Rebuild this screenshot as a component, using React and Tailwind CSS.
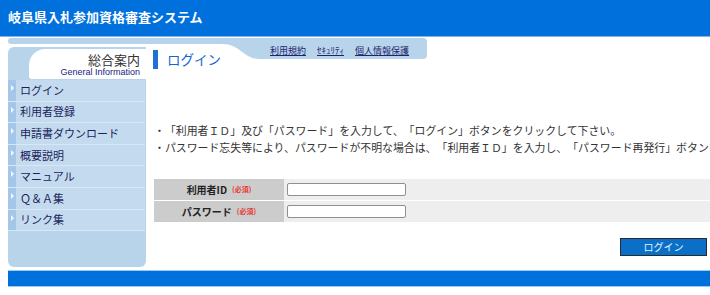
import React from "react";

const menu = ["ログイン", "利用者登録", "申請書ダウンロード", "概要説明", "マニュアル", "Ｑ＆Ａ集", "リンク集"];

function MenuItem({ label }) {
  return (
    <div className="flex h-[21.6px] border-b border-[#d7e7f5] bg-[#c4dbef]">
      <div className="w-[8px] shrink-0 bg-[#a3c6e9] flex justify-center pt-[5px]">
        <svg width="3" height="6" viewBox="0 0 3 6">
          <path d="M0 0 L3 3 L0 6 Z" fill="#f2f8fd" />
        </svg>
      </div>
      <div className="pl-[4px] flex items-center text-[11px] text-[#1c1f5a] leading-none">{label}</div>
    </div>
  );
}

function FormRow({ label, name }) {
  return (
    <div className="flex h-[22px] border-b border-dashed border-white">
      <div className="w-[130px] shrink-0 bg-[#cccccc] flex items-center justify-center gap-[5px]">
        <span className="text-[10px] font-bold text-[#222]">{label}</span>
        <span className="text-[7px] font-bold text-[#e53935]">(必須)</span>
      </div>
      <div className="flex-1 bg-[#eeeeee] flex items-center pl-[3px]">
        <input
          name={name}
          className="w-[119px] h-[13px] bg-white border border-[#8f8f8f] rounded-[2px] outline-none"
        />
      </div>
    </div>
  );
}

export default function App() {
  return (
    <div
      className="w-[710px] h-[295px] overflow-hidden bg-white text-[#333] [text-spacing-trim:space-all]"
      style={{ fontFamily: '"Noto Sans CJK JP", "Noto Sans", sans-serif' }}
    >
      <header className="h-[37px] bg-[#0070dd] border-b border-[#7db4ee] flex items-center pl-[8px] pb-[3px]">
        <h1 className="text-white font-bold text-[13px] leading-none">岐阜県入札参加資格審査システム</h1>
      </header>

      <div className="flex pl-[8px] pt-[1px]">
        <aside className="w-[138px] shrink-0 flex flex-col">
          <div className="h-[6px] bg-[#b8d4ea] rounded-l-[3px]" />
          <div className="mt-[3px] h-[220px] bg-[#b8d4ea] rounded-tl-[6px] rounded-b-[6px] flex flex-col">
            <div className="ml-[21px] mt-[2px] h-[30px] bg-white rounded-tl-[16px] rounded-bl-[3px] flex flex-col items-end pr-[6px] pt-[3px]">
              <div className="text-[13px] leading-[15px] text-[#333]">総合案内</div>
              <div
                className="text-[9px] leading-[10px] text-[#1a2380]"
                style={{ fontFamily: '"Liberation Sans", Arial, sans-serif' }}
              >
                General Information
              </div>
            </div>
            <nav className="mt-[1px] flex flex-col pr-[1px]">
              {menu.map((m) => (
                <MenuItem key={m} label={m} />
              ))}
            </nav>
          </div>
        </aside>

        <main className="flex-1 flex flex-col min-w-0">
          <div className="flex items-start">
            <div className="w-[77px] shrink-0 flex flex-col">
              <div className="h-[6px] bg-[#b8d4ea]" />
              <div className="mt-[6px] ml-[7px] flex items-center h-[19px]">
                <div className="w-[5px] h-[19px] bg-[#1f6fd6]" />
                <span className="ml-[9px] text-[13.5px] text-[#1266d0] leading-none whitespace-nowrap">ログイン</span>
              </div>
            </div>
            <svg width="37" height="21" viewBox="0 0 37 21" className="shrink-0">
              <path d="M0 0 H37 V21 C20 21 17 6 0 6 Z" fill="#b8d4ea" />
            </svg>
            <div className="w-[167px] h-[21px] bg-[#b8d4ea] rounded-r-[4px] flex items-center gap-[11px] pl-[10px] pt-[4px] text-[9px] text-[#1e2470] leading-none">
              <a href="#" className="underline">利用規約</a>
              <a href="#" className="underline">ｾｷｭﾘﾃｨ</a>
              <a href="#" className="underline">個人情報保護</a>
            </div>
          </div>

          <div className="ml-[8px] mt-[53px] text-[10.9px] leading-[17px] text-[#333] whitespace-nowrap overflow-hidden">
            <p>・「利用者ＩＤ」及び「パスワード」を入力して、「ログイン」ボタンをクリックして下さい。</p>
            <p>・パスワード忘失等により、パスワードが不明な場合は、「利用者ＩＤ」を入力し、「パスワード再発行」ボタンをクリックして下さい。</p>
          </div>

          <div className="ml-[8px] mt-[23px] flex flex-col">
            <FormRow label="利用者ID" name="uid" />
            <FormRow label="パスワード" name="pwd" />
          </div>

          <div className="flex justify-end mt-[15px] pr-[3px]">
            <button className="w-[87px] h-[18px] bg-[#0a6fc7] border border-[#2a2a2a] text-[10px] text-[#e6f2ff] leading-none">
              ログイン
            </button>
          </div>
        </main>
      </div>

      <footer className="ml-[8px] mt-[3px] h-[17px] bg-[#0070dd] border-y border-[#9ccaf2]" />
    </div>
  );
}
